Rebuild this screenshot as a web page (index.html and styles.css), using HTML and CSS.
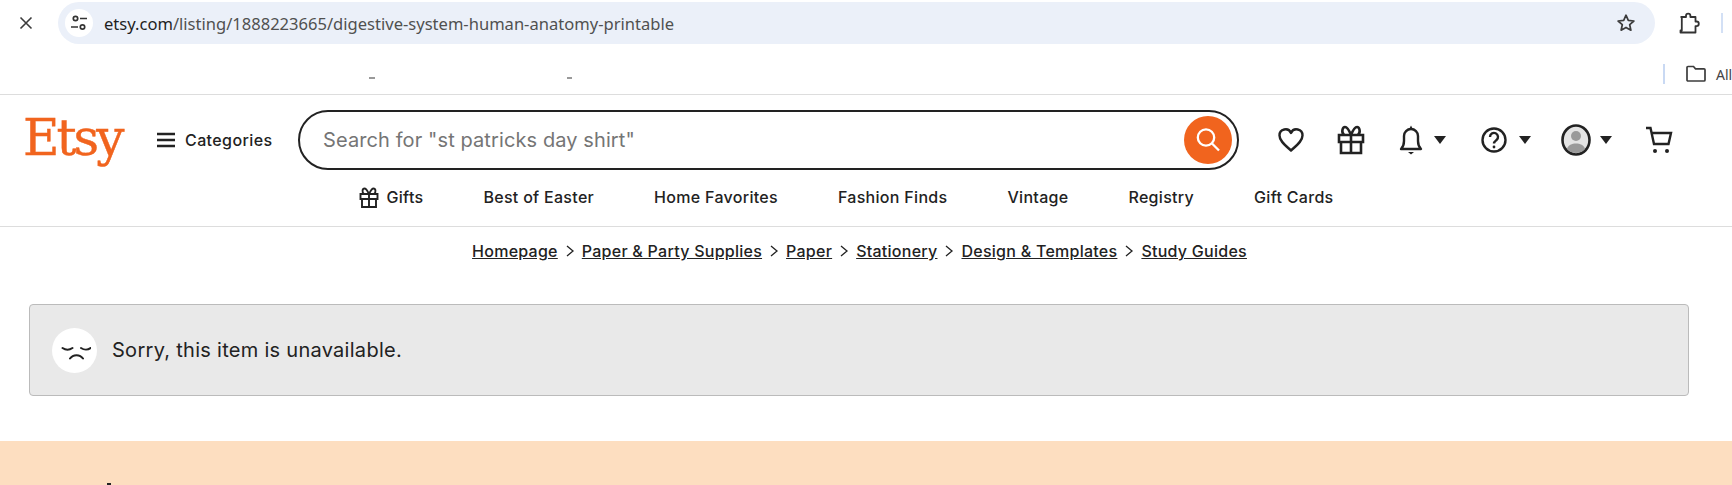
FILE: index.html
```html
<!DOCTYPE html>
<html lang="en">
<head>
    <meta charset="UTF-8">
    <meta name="viewport" content="width=device-width, initial-scale=1.0">
    <title>Etsy - item unavailable</title>
    <link rel="stylesheet" href="styles.css">
</head>
<body>
    <div class="browser-bar">
        <svg class="close-icon" width="14" height="14" viewBox="0 0 14 14"><path d="M1.5 1.5l11 11M12.5 1.5l-11 11" fill="none" stroke="#3c3c3c" stroke-width="1.6"/></svg>
        <div class="address">
            <span class="site-info">
                <svg width="20" height="20" viewBox="0 0 20 20" fill="none" stroke="#333" stroke-width="1.7"><circle cx="6.5" cy="5.5" r="2.2"/><path d="M11 5.5h7M2 14h7"/><circle cx="13.5" cy="14" r="2.2"/></svg>
            </span>
            <span class="url"><span class="url-host">etsy.com</span>/listing/1888223665/digestive-system-human-anatomy-printable</span>
            <svg class="star-icon" width="20" height="20" viewBox="0 0 20 20"><path d="M10 2.2l2.3 5.2 5.6.6-4.2 3.7 1.2 5.5-4.9-2.8-4.9 2.8 1.2-5.5L2.100 8l5.600-.6z" fill="none" stroke="#3c3c3c" stroke-width="1.700" stroke-linejoin="round"/></svg>
        </div>
        <svg class="ext-icon" width="22" height="22" viewBox="0 0 22 22"><path d="M2.500 5h5.500V3.800a2.200 2.200 0 0 1 4.400 0V5h5.100v4.500h1a2.300 2.300 0 0 1 0 4.600h-1v6.400H2.500v-2h1.300V5.500" fill="none" stroke="#333" stroke-width="1.800" stroke-linejoin="round"/></svg>
        <span class="bar-line"></span>
    </div>

    <div class="bookmarks">
        <span class="speck speck-a"></span>
        <span class="speck speck-b"></span>
        <span class="bookmark-line"></span>
        <svg class="folder-icon" width="22" height="18" viewBox="0 0 22 18"><path d="M2 2.500a1 1 0 0 1 1-1h5.500l2 2.300H19a1 1 0 0 1 1 1v10.200a1 1 0 0 1-1 1H3a1 1 0 0 1-1-1z" fill="none" stroke="#3c3c3c" stroke-width="1.700"/></svg>
        <span class="all-label">All</span>
    </div>

    <header class="site-header">
        <div class="main-row">
            <a href="#" class="logo">Etsy</a>
            <a href="#" class="categories">
                <svg width="18" height="16" viewBox="0 0 18 16"><path d="M0 2h18M0 8h18M0 14h18" stroke="#222" stroke-width="2.600"/></svg>
                Categories
            </a>
            <form class="search">
                <span class="search-text">Search for "st patricks day shirt"</span>
                <span class="search-btn">
                    <svg width="30" height="30" viewBox="0 0 30 30" fill="none" stroke="#fff" stroke-width="2.300"><circle cx="13" cy="12.500" r="8.200"/><path d="M19 18.500l7 7"/></svg>
                </span>
            </form>
            <div class="icons">
                <svg class="icon-heart" width="28" height="28" viewBox="0 0 28 28"><path d="M14 24.500C8 19 2.500 15 2.500 9.500A6 6 0 0 1 14 7a6 6 0 0 1 11.500 2.500C25.500 15 20 19 14 24.500z" fill="none" stroke="#222" stroke-width="2.400" stroke-linejoin="round"/></svg>
                <svg class="icon-gift" width="28" height="30" viewBox="0 0 28 30" fill="none" stroke="#222" stroke-width="2.600"><path d="M2 10h24v7H2zM4 17h20v11H4zM14 10v18"/><path d="M14 10C12 5 10.500 2 8 2S4 7 7 10M14 10c2-5 3.500-8 6-8s4 5 1 8"/></svg>
                <span class="icon-drop icon-drop-bell">
                    <svg width="24" height="30" viewBox="0 0 24 30"><path d="M2 24c2-2 3-4 3-8V11a7 7 0 0 1 14 0v5c0 4 1 6 3 8z" fill="none" stroke="#222" stroke-width="2.400" stroke-linejoin="round"/><path d="M9 27h6l-3 2.500zM12 .500l1.800 3.500h-3.600z" fill="#222"/></svg>
                    <span class="caret"></span>
                </span>
                <span class="icon-drop icon-drop-help">
                    <svg width="26" height="26" viewBox="0 0 26 26" fill="none" stroke="#222"><circle cx="13" cy="13" r="11.500" stroke-width="2.400"/><path d="M9 10a4 4 0 1 1 6.500 3c-1.500 1.200-2.500 1.800-2.500 3.500" stroke-width="2.400"/><circle cx="13" cy="20" r="1.400" fill="#222" stroke="none"/></svg>
                    <span class="caret"></span>
                </span>
                <span class="icon-drop icon-drop-user">
                    <svg width="30" height="32" viewBox="0 0 30 32"><ellipse cx="15" cy="16" rx="13.500" ry="14.500" fill="#e4e4e4" stroke="#222" stroke-width="2.600"/><circle cx="15" cy="12" r="5" fill="#9a9a9a"/><path d="M6 25c1-4 5-5.500 9-5.500s8 1.500 9 5.500a12 12 0 0 1-18 0z" fill="#9a9a9a"/></svg>
                    <span class="caret"></span>
                </span>
                <svg class="icon-cart" width="28" height="28" viewBox="0 0 28 28"><path d="M1 2h4.500l3.500 16h14.500L26 7H6.500" fill="none" stroke="#222" stroke-width="2.400"/><circle cx="10" cy="25" r="2" fill="#222"/><circle cx="22" cy="25" r="2" fill="#222"/></svg>
            </div>
        </div>
        <nav class="nav-row">
            <a href="#" class="nav-gift">
                <svg width="20" height="21" viewBox="0 0 20 21" fill="none" stroke="#222" stroke-width="1.900"><path d="M1.500 7h17v5h-17zM3 12h14v8H3zM10 7v13"/><path d="M10 7C8.500 4 7.500 1.500 5.500 1.500S2.500 5 5 7M10 7c1.500-3 2.500-5.500 4.500-5.500s3 3.500.5 5.500"/></svg>
                Gifts
            </a>
            <a href="#">Best of Easter</a>
            <a href="#">Home Favorites</a>
            <a href="#">Fashion Finds</a>
            <a href="#">Vintage</a>
            <a href="#">Registry</a>
            <a href="#">Gift Cards</a>
        </nav>
    </header>

    <div class="crumbs">
        <a href="#">Homepage</a>
        <svg width="10" height="14" viewBox="0 0 10 14"><path d="M2 2l6 5-6 5" fill="none" stroke="#222" stroke-width="1.300"/></svg>
        <a href="#">Paper &amp; Party Supplies</a>
        <svg width="10" height="14" viewBox="0 0 10 14"><path d="M2 2l6 5-6 5" fill="none" stroke="#222" stroke-width="1.300"/></svg>
        <a href="#">Paper</a>
        <svg width="10" height="14" viewBox="0 0 10 14"><path d="M2 2l6 5-6 5" fill="none" stroke="#222" stroke-width="1.300"/></svg>
        <a href="#">Stationery</a>
        <svg width="10" height="14" viewBox="0 0 10 14"><path d="M2 2l6 5-6 5" fill="none" stroke="#222" stroke-width="1.300"/></svg>
        <a href="#">Design &amp; Templates</a>
        <svg width="10" height="14" viewBox="0 0 10 14"><path d="M2 2l6 5-6 5" fill="none" stroke="#222" stroke-width="1.300"/></svg>
        <a href="#">Study Guides</a>
    </div>

    <div class="alert">
        <span class="alert-face">
            <svg width="32" height="20" viewBox="0 0 32 20" fill="none" stroke="#222" stroke-width="2" stroke-linecap="round"><path d="M3.500 8c3 2 7 2 10 0M22 8c3 2 7 2 9.500 0M11 18.500c3-4.500 10-4.500 13 0"/></svg>
        </span>
        Sorry, this item is unavailable.
    </div>

    <div class="promo"><span class="promo-mark"></span></div>
</body>
</html>
```

FILE: styles.css
```css
* {
    box-sizing: border-box;
}
html, body {
    height: 485px;
    overflow: hidden;
}
body {
    margin: 0;
    background-color: #fff;
    color: #222;
    font-family: Inter, "Liberation Sans", sans-serif;
}
a {
    color: #222;
    text-decoration: none;
}
svg {
    display: block;
    flex: none;
}

/* browser chrome */
.browser-bar {
    display: flex;
    align-items: center;
    height: 46px;
    padding: 2px 0 2px 19px;
}
.close-icon {
    margin-right: 25px;
}
.address {
    display: flex;
    align-items: center;
    width: 1597px;
    height: 42px;
    padding: 0 19px 0 7px;
    background-color: #ebf0f9;
    border-radius: 21px;
}
.site-info {
    display: flex;
    align-items: center;
    justify-content: center;
    width: 28px;
    height: 28px;
    margin-right: 11px;
    background-color: #fff;
    border-radius: 50%;
}
.url {
    flex: 1;
    font-family: "Noto Sans", sans-serif;
    font-size: 16.56px;
    color: #505050;
}
.url-host {
    color: #1f1f1f;
}
.ext-icon {
    margin-left: 23px;
}
.bar-line {
    width: 2px;
    height: 20px;
    margin-left: 21px;
    background-color: #d3e0f5;
}
.bookmarks {
    display: flex;
    align-items: center;
    height: 49px;
    padding-top: 8px;
    border-bottom: 1px solid #ddd;
}
.speck {
    height: 2px;
    margin-top: 8px;
    background-color: #999;
}
.speck-a {
    width: 6px;
    margin-left: 369px;
}
.speck-b {
    width: 5px;
    margin-left: 192px;
}
.bookmark-line {
    width: 2px;
    height: 20px;
    margin-left: auto;
    background-color: #c9d9f3;
}
.folder-icon {
    margin-left: 20px;
}
.all-label {
    width: 16px;
    margin-left: 9px;
    font-family: "Noto Sans", sans-serif;
    font-size: 14px;
    white-space: nowrap;
    color: #444;
}

/* etsy header */
.site-header {
    height: 132px;
    border-bottom: 1px solid #ddd;
}
.main-row {
    display: flex;
    align-items: center;
    height: 77px;
    padding: 12px 0 0 23px;
}
.logo {
    width: 134px;
    padding-bottom: 3px;
    font-family: "DejaVu Serif", serif;
    font-size: 50px;
    line-height: 60px;
    letter-spacing: -3px;
    color: #f1641e;
    -webkit-text-stroke: .4px #f1641e;
}
.categories {
    display: flex;
    align-items: center;
    gap: 10px;
    width: 141px;
    font-size: 16px;
    font-weight: 500;
    letter-spacing: .4px;
}
.search {
    display: flex;
    align-items: center;
    justify-content: space-between;
    width: 941px;
    height: 60px;
    padding: 0 5px 0 23px;
    border: 2px solid #222;
    border-radius: 30px;
}
.search-text {
    font-size: 20px;
    letter-spacing: .1px;
    color: #757575;
}
.search-btn {
    display: flex;
    align-items: center;
    justify-content: center;
    width: 48px;
    height: 48px;
    background-color: #f1641e;
    border-radius: 50%;
}
.icons {
    display: flex;
    align-items: center;
    margin-left: 38px;
}
.icon-gift {
    margin-left: 32px;
}
.icon-drop {
    display: flex;
    align-items: center;
}
.icon-drop-bell {
    gap: 11px;
    margin-left: 34px;
}
.icon-drop-help {
    gap: 12px;
    margin-left: 35px;
}
.icon-drop-user {
    gap: 9px;
    margin-left: 30px;
}
.icon-cart {
    margin-left: 33px;
}
.caret {
    width: 0;
    height: 0;
    border-left: 6px solid transparent;
    border-right: 6px solid transparent;
    border-top: 8px solid #222;
}
.nav-row {
    display: flex;
    align-items: center;
    justify-content: center;
    gap: 60px;
    height: 44px;
    padding: 6px 40px 0 0;
    font-size: 16px;
    font-weight: 500;
    letter-spacing: .3px;
}
.nav-gift {
    display: flex;
    align-items: center;
    gap: 8px;
}

/* breadcrumbs and message */
.crumbs {
    display: flex;
    align-items: center;
    justify-content: center;
    gap: 7px;
    height: 48px;
    padding-right: 13px;
    font-size: 16px;
    font-weight: 500;
    letter-spacing: .26px;
}
.crumbs a {
    text-decoration: underline;
}
.alert {
    display: flex;
    align-items: center;
    gap: 15px;
    width: 1660px;
    height: 92px;
    margin: 29px 0 0 29px;
    padding-left: 22px;
    background-color: #e9e9e9;
    border: 1px solid #bbb;
    border-radius: 4px;
    font-size: 20px;
    letter-spacing: .28px;
}
.alert-face {
    display: flex;
    align-items: center;
    justify-content: center;
    width: 45px;
    height: 45px;
    background-color: #fff;
    border-radius: 50%;
}
.promo {
    height: 60px;
    margin-top: 45px;
    padding: 42px 0 0 107px;
    background-color: #fddec0;
}
.promo-mark {
    display: block;
    width: 4px;
    height: 2px;
    background-color: #222;
}
```
